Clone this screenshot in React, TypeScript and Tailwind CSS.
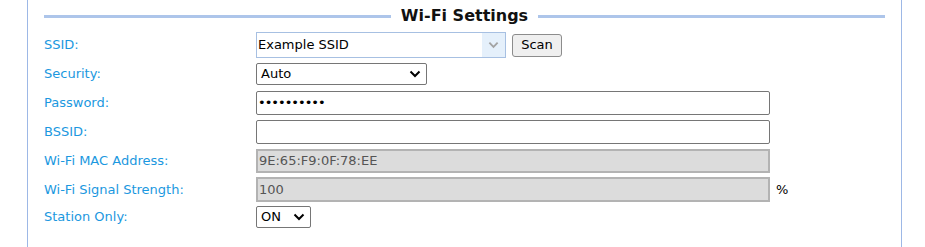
import React from "react";

const font = { fontFamily: "'DejaVu Sans', Verdana, sans-serif" };

function Chevron({ color = "#000", w = 12 }: { color?: string; w?: number }) {
  return (
    <svg width={w} height={8} viewBox="0 0 12 8" fill="none">
      <path d="M1.5 1.5 L6 6 L10.5 1.5" stroke={color} strokeWidth="2" />
    </svg>
  );
}

function Row({ label, h, children }: { label: string; h: string; children: React.ReactNode }) {
  return (
    <div className={`flex items-center ${h}`}>
      <div className="w-[212px] shrink-0 text-[13px] text-[#1b98e0]">{label}</div>
      {children}
    </div>
  );
}

export default function App() {
  return (
    <div className="w-[925px] h-[247px] bg-white" style={font}>
      <div className="ml-[27px] w-[875px] h-[247px] border-x border-[#9db8e6] pl-[16px] pr-[16px]">
        <div className="flex items-center h-[30px] pt-[2px]">
          <div className="flex-1 h-[3px] bg-[#adc5ea]" />
          <div className="px-[10px] text-[16px] font-bold text-[#111] leading-none">Wi-Fi Settings</div>
          <div className="flex-1 h-[3px] bg-[#adc5ea]" />
        </div>

        <Row label="SSID:" h="h-[30px]">
          <div className="flex items-center gap-[6px]">
            <div className="flex h-[26px] w-[250px] border border-[#a7c0e2] bg-white">
              <div className="flex-1 flex items-center pl-[1px] text-[13px] text-black">Example SSID</div>
              <div className="w-[23px] flex items-center justify-center bg-[#e5f0fb]">
                <Chevron color="#a3a3a3" w={11} />
              </div>
            </div>
            <button className="h-[23px] w-[50px] rounded-[3px] border border-[#8c8c8c] bg-[#efefef] text-[13px] text-black">
              Scan
            </button>
          </div>
        </Row>

        <Row label="Security:" h="h-[28px]">
          <div className="flex h-[22px] w-[171px] items-center justify-between rounded-[2px] border border-[#767676] pl-[4px] pr-[5px] text-[13px] text-black">
            <span>Auto</span>
            <Chevron />
          </div>
        </Row>

        <Row label="Password:" h="h-[29px]">
          <div className="flex h-[24px] w-[514px] items-center rounded-[2px] border border-[#767676] pl-[1px] text-[13px] tracking-[-1px] text-black">
            ••••••••••
          </div>
        </Row>

        <Row label="BSSID:" h="h-[29px]">
          <div className="h-[24px] w-[514px] rounded-[2px] border border-[#767676]" />
        </Row>

        <Row label="Wi-Fi MAC Address:" h="h-[29px]">
          <div className="flex h-[24px] w-[514px] items-center border-2 border-[#b3b3b3] bg-[#dcdcdc] pl-[1px] text-[13px] text-[#555]">
            9E:65:F9:0F:78:EE
          </div>
        </Row>

        <Row label="Wi-Fi Signal Strength:" h="h-[29px]">
          <div className="flex h-[25px] w-[514px] items-center border-2 border-[#b3b3b3] bg-[#dcdcdc] pl-[1px] text-[13px] text-[#555]">
            100
          </div>
          <span className="ml-[6px] text-[13px] text-black">%</span>
        </Row>

        <Row label="Station Only:" h="h-[26px]">
          <div className="flex h-[22px] w-[55px] items-center justify-between rounded-[2px] border border-[#767676] pl-[4px] pr-[5px] text-[13px] text-black">
            <span>ON</span>
            <Chevron />
          </div>
        </Row>
      </div>
    </div>
  );
}
